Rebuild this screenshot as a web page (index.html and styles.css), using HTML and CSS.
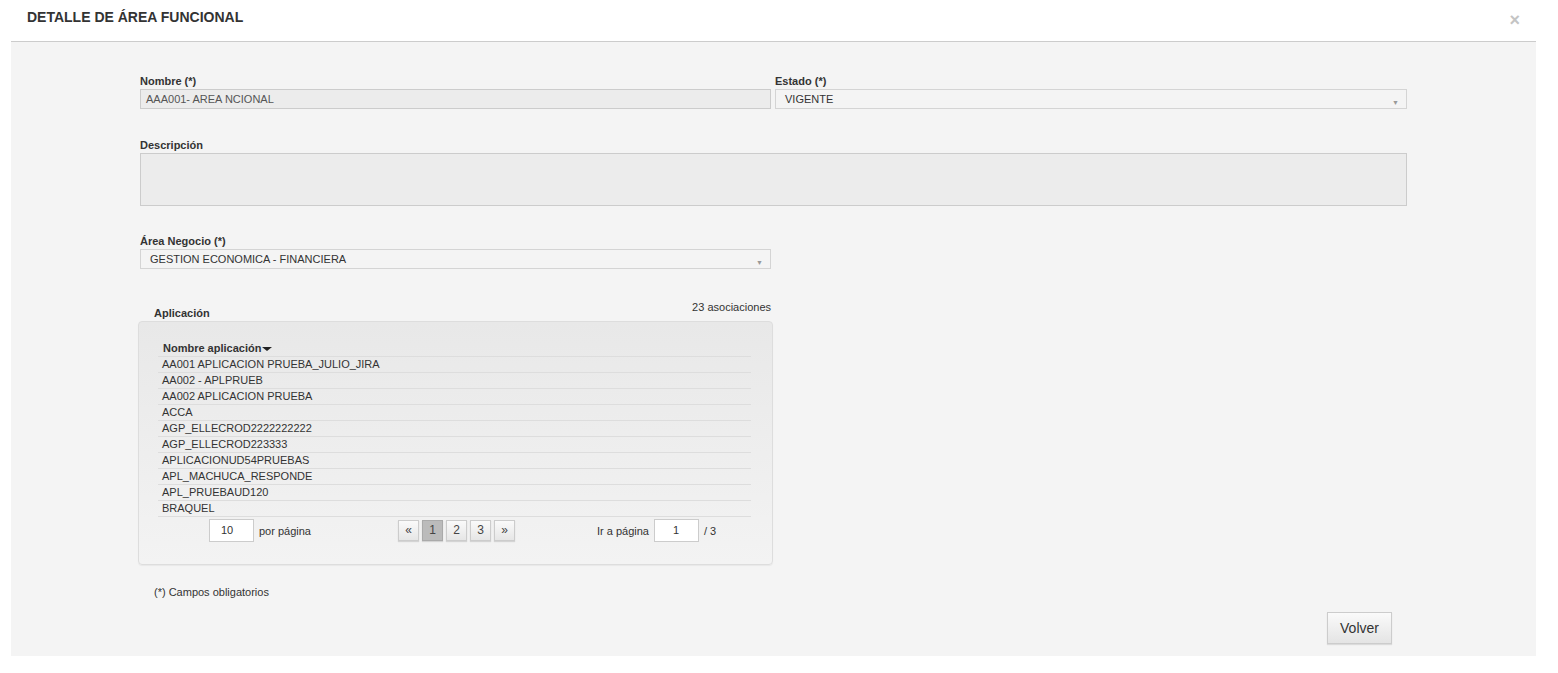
FILE: index.html
```html
<!DOCTYPE html>
<html>
<head>
    <title>Detalle de Área Funcional</title>
    <link rel="stylesheet" href="styles.css">
</head>
<body>
    <div class="modal">
        <div class="modal-header">
            <h1>DETALLE DE ÁREA FUNCIONAL</h1>
            <span class="close">&times;</span>
        </div>
        <div class="modal-body">
            <!-- Nombre / Estado -->
            <div class="row-2">
                <div class="form-group">
                    <label>Nombre (*)</label>
                    <div class="field readonly">AAA001- AREA NCIONAL</div>
                </div>
                <div class="form-group">
                    <label>Estado (*)</label>
                    <div class="field select">VIGENTE<span class="arrow">&#9660;</span></div>
                </div>
            </div>

            <!-- Descripcion -->
            <div class="form-group tight">
                <label>Descripción</label>
                <div class="field textarea"></div>
            </div>

            <!-- Area negocio -->
            <div class="row-2">
                <div class="form-group">
                    <label>Área Negocio (*)</label>
                    <div class="field select">GESTION ECONOMICA - FINANCIERA<span class="arrow">&#9660;</span></div>
                </div>
                <div></div>
            </div>

            <!-- Aplicaciones -->
            <div class="apps">
                <div class="apps-head">
                    <span class="apps-title">Aplicación</span>
                    <span class="apps-count">23 asociaciones</span>
                </div>
                <div class="apps-box">
                    <table class="apps-table">
                        <thead>
                            <tr><th>Nombre aplicación <span class="caret"></span></th></tr>
                        </thead>
                        <tbody>
                            <tr><td>AA001 APLICACION PRUEBA_JULIO_JIRA</td></tr>
                            <tr><td>AA002 - APLPRUEB</td></tr>
                            <tr><td>AA002 APLICACION PRUEBA</td></tr>
                            <tr><td>ACCA</td></tr>
                            <tr><td>AGP_ELLECROD2222222222</td></tr>
                            <tr><td>AGP_ELLECROD223333</td></tr>
                            <tr><td>APLICACIONUD54PRUEBAS</td></tr>
                            <tr><td>APL_MACHUCA_RESPONDE</td></tr>
                            <tr><td>APL_PRUEBAUD120</td></tr>
                            <tr><td>BRAQUEL</td></tr>
                        </tbody>
                    </table>
                    <div class="pager">
                        <div class="pager-size">
                            <span class="pager-input">10</span>
                            <span>por página</span>
                        </div>
                        <div class="pager-pages">
                            <span class="pbtn">&laquo;</span>
                            <span class="pbtn active">1</span>
                            <span class="pbtn">2</span>
                            <span class="pbtn">3</span>
                            <span class="pbtn">&raquo;</span>
                        </div>
                        <div class="pager-goto">
                            <span>Ir a página</span>
                            <span class="pager-input">1</span>
                            <span>/ 3</span>
                        </div>
                    </div>
                </div>
            </div>

            <p class="note">(*) Campos obligatorios</p>

            <div class="actions">
                <button class="btn">Volver</button>
            </div>
        </div>
    </div>
</body>
</html>
```

FILE: styles.css
```css
body { margin: 0; background: #fff; font-family: "Liberation Sans", Arial, sans-serif; font-size: 11px; color: #333; }
.modal { margin: 0 22px 0 11px; }
.modal-header { height: 41px; border-bottom: 1px solid #ccc; display: flex; justify-content: space-between; align-items: flex-start; padding: 0 16px; }
.modal-header h1 { margin: 9px 0 0; font-size: 14px; font-weight: bold; color: #333; }
.close { margin-top: 12px; font-size: 18px; line-height: 17px; color: #c4c4c4; font-weight: bold; }
.modal-body { background: #f4f4f4; padding: 32px 129px 12px; }
.row-2 { display: grid; grid-template-columns: 631px 1fr; gap: 4px; }
.form-group { margin-bottom: 29px; }
.form-group.tight { margin-bottom: 28px; }
label { display: block; font-weight: bold; line-height: 14px; margin-bottom: 1px; }
.field { box-sizing: border-box; height: 20px; border: 1px solid #d4d4d4; line-height: 18px; padding: 0 5px; color: #555; position: relative; }
.readonly { background: #ececec; border-color: #ccc; }
.select { background: #f4f4f4; padding-left: 9px; color: #333; }
.textarea { height: 53px; background: #ececec; border-color: #ccc; }
.arrow { position: absolute; right: 7px; top: 4px; font-size: 7px; color: #999; }
.apps { width: 633px; margin-top: 3px; }
.apps-head { position: relative; height: 20px; }
.apps-title { position: absolute; left: 14px; top: 6px; font-weight: bold; }
.apps-count { position: absolute; right: 2px; top: 0; }
.apps-box { margin-left: -2px; border: 1px solid #ddd; border-radius: 4px; background: linear-gradient(#e8e8e8, #f3f3f3); padding: 19px 21px 22px 19px; box-shadow: 0 1px 1px rgba(0,0,0,0.05); }
.apps-table { width: 100%; border-collapse: collapse; }
.apps-table th { text-align: left; font-weight: bold; padding: 0 0 1px 5px; line-height: 14px; border-bottom: 1px solid #ddd; }
.apps-table td { padding: 0 0 0 4px; line-height: 15px; border-bottom: 1px solid #ddd; }
.caret { display: inline-block; width: 0; height: 0; border-left: 5px solid transparent; border-right: 5px solid transparent; border-top: 4px solid #222; vertical-align: middle; margin-left: -2px; }
.pager { display: grid; grid-template-columns: 240px 199px 1fr; align-items: center; margin-top: 2px; height: 23px; }
.pager-size { display: flex; align-items: center; gap: 5px; padding-left: 51px; }
.pager-input { box-sizing: border-box; display: inline-block; width: 45px; height: 23px; line-height: 21px; border: 1px solid #ccc; background: #fff; padding-left: 11px; }
.pager-pages { display: flex; gap: 3px; }
.pbtn { box-sizing: border-box; width: 21px; height: 21px; line-height: 19px; text-align: center; font-size: 12px; border: 1px solid #ccc; background: linear-gradient(#fafafa, #e6e6e6); box-shadow: 0 1px 1px rgba(0,0,0,0.12); color: #444; }
.pbtn.active { background: #bbb; border-color: #aaa; }
.pager-goto { display: flex; align-items: center; gap: 5px; }
.pager-goto .pager-input { padding-left: 18px; }
.note { margin: 20px 0 0 14px; line-height: 14px; }
.actions { display: flex; justify-content: flex-end; margin-top: 13px; padding-right: 15px; }
.btn { font-family: "Liberation Sans", Arial, sans-serif; font-size: 14px; color: #333; width: 65px; height: 32px; border: 1px solid #ccc; background: linear-gradient(#fafafa, #e4e4e4); box-shadow: 0 1px 1px rgba(0,0,0,0.1); }
```
